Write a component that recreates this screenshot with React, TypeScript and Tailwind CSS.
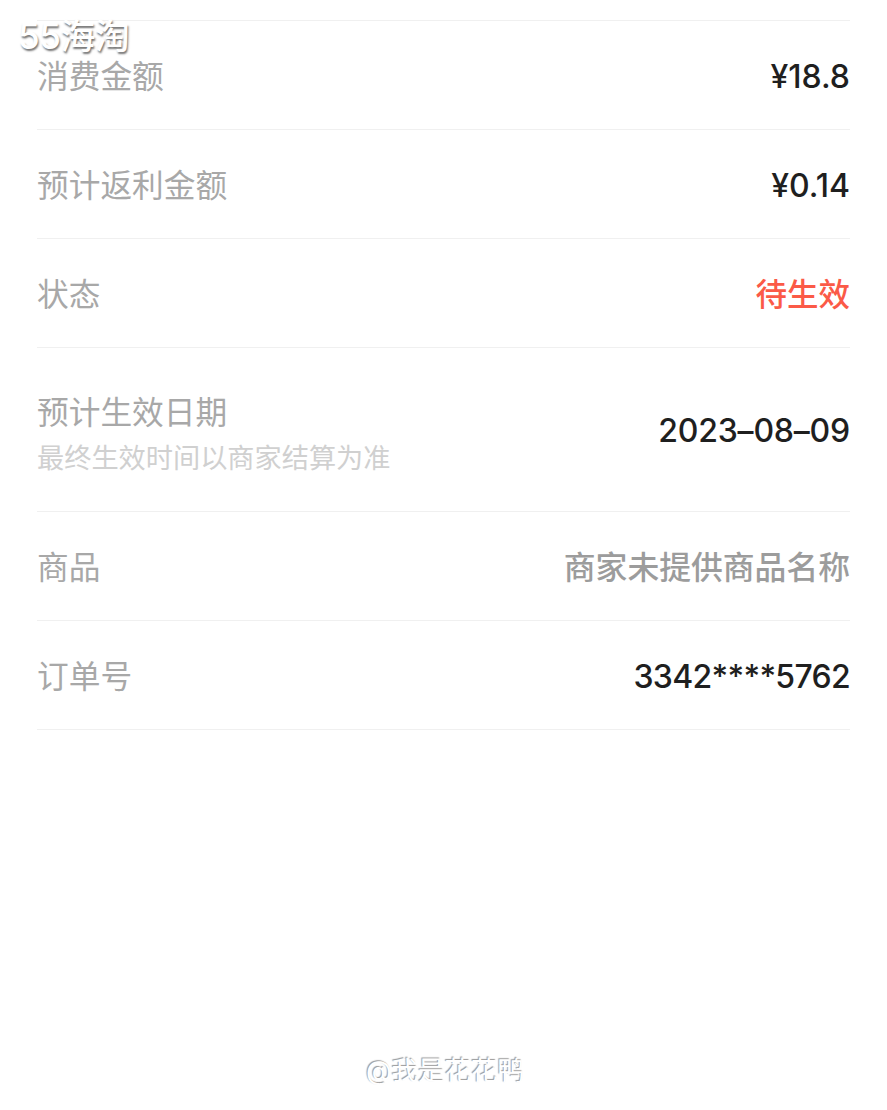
const cjk = "font-['Inter','Noto_Sans_CJK_SC',sans-serif]";

interface RowProps {
  label: string;
  note?: string;
  value: string;
  valueClass?: string;
  height?: string;
}

const Row = ({ label, note, value, valueClass = 'text-[32px] text-[#1f1f1f]', height = 'h-[109.1px]' }: RowProps) => (
  <div className={`flex items-center justify-between border-b border-[#f0f0f0] ${height}`}>
    <div className={`flex flex-col ${note ? 'pt-[10px]' : 'pt-[4px]'}`}>
      <span className="text-[31.7px] leading-[40px] text-[#a8a8a8]">{label}</span>
      {note && <span className="mt-[9px] text-[27.2px] leading-[34px] text-[#d0d0d0]">{note}</span>}
    </div>
    <span className={`pt-[4px] font-medium leading-[40px] ${valueClass}`}>{value}</span>
  </div>
);

export default function App() {
  return (
    <div className={`relative h-[1110px] w-[887px] overflow-hidden bg-white ${cjk}`}>
      <div className="px-[37px] pt-[19.5px]">
        <div className="border-t border-[#f0f0f0]">
          <Row label="消费金额" value="¥18.8" />
          <Row label="预计返利金额" value="¥0.14" />
          <Row label="状态" value="待生效" valueClass="text-[31.5px] text-[#fb5a47]" />
          <Row
            label="预计生效日期"
            note="最终生效时间以商家结算为准"
            value="2023–08–09"
            valueClass="text-[32px] tracking-[-0.2px] text-[#1f1f1f]"
            height="h-[164px]"
          />
          <Row label="商品" value="商家未提供商品名称" valueClass="text-[31.8px] text-[#9c9c9c]" />
          <Row label="订单号" value="3342****5762" valueClass="text-[32px] tracking-[-0.7px] text-[#1f1f1f]" />
        </div>
      </div>
      <div className="absolute left-[18px] top-[16px] text-[35px] font-medium leading-[40px] tracking-[-0.5px] text-white [text-shadow:1px_2px_2px_rgba(0,0,0,0.55)]">
        55海淘
      </div>
      <div className="absolute left-[366px] top-[1053px] text-[26.5px] leading-[34px] text-white [text-shadow:-1px_-1px_1px_rgba(0,0,0,0.4)]">
        @我是花花鸭
      </div>
    </div>
  );
}
